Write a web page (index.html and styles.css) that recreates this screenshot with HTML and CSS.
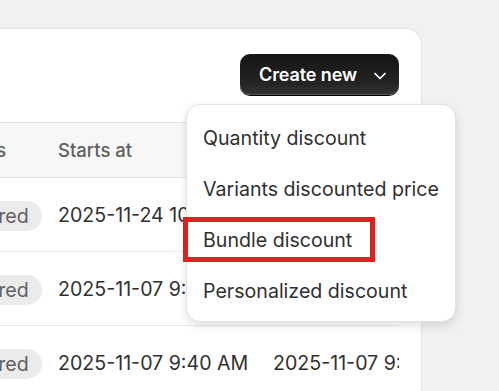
FILE: index.html
```html
<!DOCTYPE html>
<html>
<head>
<meta charset="utf-8">
<link rel="stylesheet" href="styles.css">
</head>
<body>
<div class="card">
  <div class="toolbar">
    <button class="create-btn">Create new
      <svg class="chev" width="14" height="14" viewBox="0 0 14 14"><path d="M2 4.5 L7 9.5 L12 4.5" fill="none" stroke="#fff" stroke-width="1.7" stroke-linecap="round" stroke-linejoin="round"/></svg>
    </button>
  </div>
  <div class="table-wrap">
    <div class="row head">
      <div class="cell">Status</div>
      <div class="cell">Starts at</div>
      <div class="cell">Ends at</div>
    </div>
    <div class="row">
      <div class="cell"><span class="badge">Expired</span></div>
      <div class="cell">2025-11-24 10:00 AM</div>
      <div class="cell">2025-11-30 10:00 AM</div>
    </div>
    <div class="row">
      <div class="cell"><span class="badge">Expired</span></div>
      <div class="cell">2025-11-07 9:40 AM</div>
      <div class="cell">2025-11-07 9:50 AM</div>
    </div>
    <div class="row">
      <div class="cell"><span class="badge">Expired</span></div>
      <div class="cell">2025-11-07 9:40 AM</div>
      <div class="cell">2025-11-07 9:50 AM</div>
    </div>
  </div>
</div>
<div class="menu">
  <div class="item">Quantity discount</div>
  <div class="item">Variants discounted price</div>
  <div class="item">Bundle discount</div>
  <div class="item">Personalized discount</div>
</div>
<div class="highlight"></div>
</body>
</html>
```
FILE: styles.css
```css
html, body {
  margin: 0;
  padding: 0;
  background: #f1f1f1;
  font-family: Inter, "Noto Sans", sans-serif;
  color: #303030;
  overflow: hidden;
  height: 391px;
}
.card {
  margin-top: 28px;
  margin-left: -140px;
  width: 562px;
  height: 363px;
  background: #fff;
  border: 1px solid #e3e3e3;
  border-bottom: none;
  border-radius: 0 16px 0 0;
  box-sizing: border-box;
  overflow: hidden;
}
.toolbar {
  display: flex;
  justify-content: flex-end;
  padding: 25px 22px 27px 0;
}
.create-btn {
  display: flex;
  align-items: center;
  gap: 16px;
  width: 159px;
  height: 41px;
  padding: 0 0 0 19px;
  border: none;
  border-radius: 10px;
  background: linear-gradient(#161616, #232323 70%, #343434);
  box-shadow: inset 0 -1px 0 #555, 0 1px 0 #000;
  color: #fff;
  font-family: inherit;
  font-size: 18px;
  font-weight: 600;
  letter-spacing: -0.1px;
}
.chev { margin-top: 2px; }
.table-wrap {
  margin-right: 22px;
  overflow: hidden;
}
.row {
  display: grid;
  grid-template-columns: 110px 213px 1fr;
  padding-left: 89px;
  height: 73px;
  align-items: center;
  border-bottom: 1px solid #ebebeb;
  white-space: nowrap;
  font-size: 19.6px;
}
.row.head {
  height: 54px;
  background: #f7f7f7;
  border-top: 1px solid #e3e3e3;
  border-bottom: 1px solid #e3e3e3;
  color: #616161;
  font-size: 18.5px;
  font-weight: 500;
}
.row .cell:nth-child(2) { margin-left: -2px; }
.badge {
  display: inline-block;
  height: 30px;
  line-height: 30px;
  padding: 0 13px 0 10px;
  margin-left: -1px;
  margin-top: 3px;
  border-radius: 15px;
  background: #ebebeb;
  color: #616161;
  font-size: 19.6px;
}
.menu {
  position: absolute;
  left: 186px;
  top: 104px;
  width: 270px;
  height: 218px;
  box-sizing: border-box;
  padding: 8px 0 6px;
  background: #fff;
  border: 1px solid #e3e3e3;
  border-radius: 14px;
  box-shadow: 0 4px 10px rgba(0,0,0,0.12);
}
.item {
  height: 51px;
  line-height: 51px;
  padding-left: 16px;
  font-size: 19.6px;
  color: #303030;
  white-space: nowrap;
}
.highlight {
  position: absolute;
  left: 183px;
  top: 217px;
  width: 192px;
  height: 45px;
  box-sizing: border-box;
  border: 5px solid #e01f22;
}
```
